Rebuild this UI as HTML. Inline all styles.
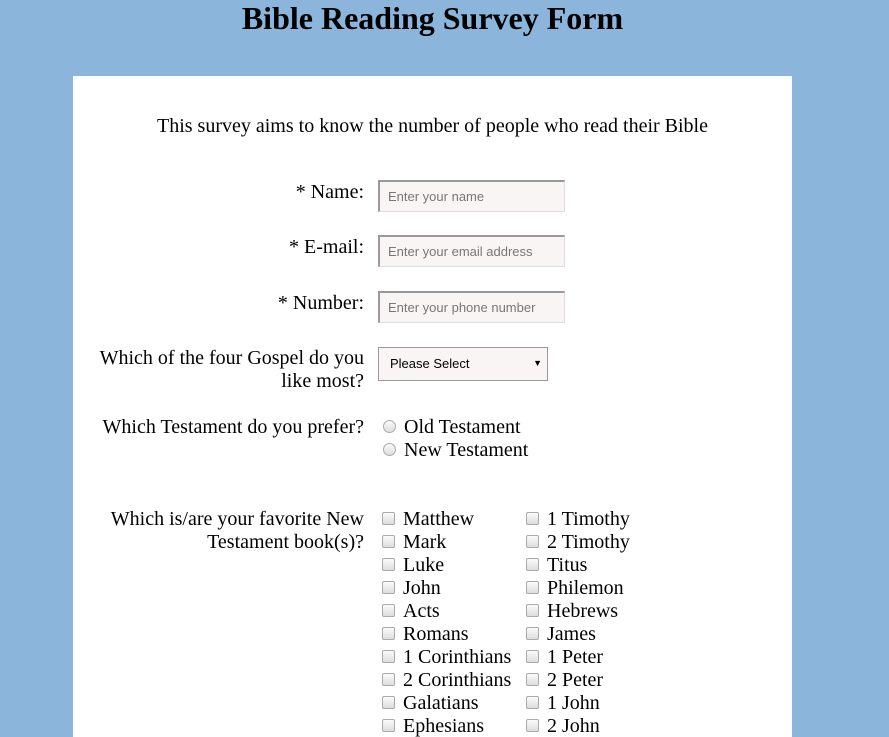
<!DOCTYPE html>
<html><head><style>
html,body{margin:0;width:889px;height:737px;overflow:hidden}
body{background:#8bb5db;font-family:"Liberation Serif",serif;color:#000;position:relative}
.a{position:absolute;white-space:nowrap}
h1{position:absolute;left:0;width:865px;text-align:center;top:0;margin:0;font-size:32px;line-height:36px;font-weight:bold}
.panel{position:absolute;left:73px;top:76px;width:719px;height:661px;background:#fff}
.lab{position:absolute;right:525px;text-align:right;font-size:20px;line-height:23px;white-space:nowrap}
.in{position:absolute;left:378px;width:187px;height:32px;background:#f9f5f4;border:1px solid #ddd;border-top:2px solid #999;border-left:2px solid #999;box-sizing:border-box;font-family:"Liberation Sans",sans-serif;font-size:13px;color:#777;padding:7px 0 0 8px}
.cb{position:absolute;width:11px;height:11px;border:1px solid #aaa;border-radius:2px;background:linear-gradient(#fafafa,#ddd)}
.rd{position:absolute;width:11px;height:11px;border:1px solid #aaa;border-radius:50%;background:linear-gradient(#fafafa,#ddd)}
.t{position:absolute;font-size:20px;line-height:23px;white-space:nowrap}
</style></head><body>
<h1>Bible Reading Survey Form</h1>
<div class="panel"></div>
<div class="a" style="left:0;width:865px;text-align:center;top:115px;font-size:20px;line-height:23px">This survey aims to know the number of people who read their Bible</div>
<div class="lab" style="top:181px">* Name:</div>
<div class="in" style="top:180px">Enter your name</div>
<div class="lab" style="top:236px">* E-mail:</div>
<div class="in" style="top:235px">Enter your email address</div>
<div class="lab" style="top:292px">* Number:</div>
<div class="in" style="top:291px">Enter your phone number</div>
<div class="lab" style="top:347px">Which of the four Gospel do you<br>like most?</div>
<div class="a" style="left:378px;top:347px;width:170px;height:34px;box-sizing:border-box;border:1px solid #999;background:#f9f5f4;font-family:'Liberation Sans',sans-serif;font-size:13px;padding:8px 0 0 11px">Please Select<span style="position:absolute;right:5px;top:10px;font-size:9px">&#9660;</span></div>
<div class="lab" style="top:416px">Which Testament do you prefer?</div>
<div class="rd" style="left:383px;top:420px"></div><div class="t" style="left:404px;top:416px">Old Testament</div>
<div class="rd" style="left:383px;top:443px"></div><div class="t" style="left:404px;top:439px">New Testament</div>
<div class="lab" style="top:508px">Which is/are your favorite New<br>Testament book(s)?</div>
<div id="c"></div>
<script>
var a=["Matthew","Mark","Luke","John","Acts","Romans","1 Corinthians","2 Corinthians","Galatians","Ephesians"],b=["1 Timothy","2 Timothy","Titus","Philemon","Hebrews","James","1 Peter","2 Peter","1 John","2 John"],h="";
for(var i=0;i<10;i++){var y=508+i*23;h+='<div class="cb" style="left:382px;top:'+(y+4)+'px"></div><div class="t" style="left:403px;top:'+y+'px">'+a[i]+'</div><div class="cb" style="left:526px;top:'+(y+4)+'px"></div><div class="t" style="left:547px;top:'+y+'px">'+b[i]+'</div>';}
document.getElementById("c").innerHTML=h;
</script>
</body></html>
